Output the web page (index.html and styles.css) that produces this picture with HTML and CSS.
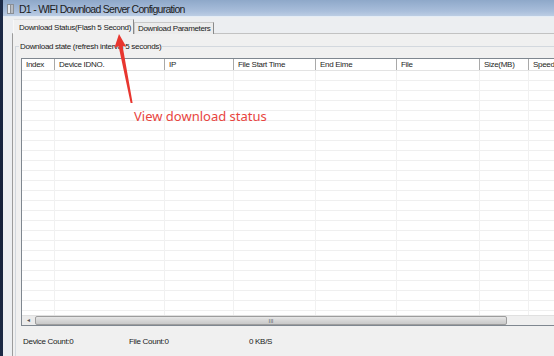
FILE: index.html
```html
<!DOCTYPE html>
<html>
<head>
<meta charset="utf-8">
<link rel="stylesheet" href="styles.css">
</head>
<body>
<div class="screen">
  <div class="desk-strip"></div>
  <div class="window">
    <div class="titlebar">
      <svg class="app-icon" width="7" height="10" viewBox="0 0 7 10"><rect x="0" y="0" width="7" height="10" fill="#8a8f96"/><rect x="1" y="1" width="2" height="8" fill="#e8eaee"/><rect x="4" y="1" width="2" height="8" fill="#b9bdc3"/></svg>
      <span class="title">D1 - WIFI Download Server Configuration</span>
    </div>
    <div class="frame">
      <div class="tabs">
        <div class="tab active">Download Status(Flash 5 Second)</div>
        <div class="tab">Download Parameters</div>
      </div>
      <div class="tabpage">
        <fieldset class="group">
          <legend>Download state (refresh interval 5 seconds)</legend>
          <div class="listview">
            <div class="lv-header">
              <div class="hcell">Index</div>
              <div class="hcell">Device IDNO.</div>
              <div class="hcell">IP</div>
              <div class="hcell">File Start Time</div>
              <div class="hcell">End Eime</div>
              <div class="hcell">File</div>
              <div class="hcell">Size(MB)</div>
              <div class="hcell">Speed</div>
            </div>
            <div class="lv-body">
              <div class="col"></div><div class="col"></div><div class="col"></div><div class="col"></div>
              <div class="col"></div><div class="col"></div><div class="col"></div><div class="col"></div>
            </div>
            <div class="hscroll">
              <div class="arrow-btn">◂</div>
              <div class="thumb"><span class="grip">III</span></div>
              <div class="track"></div>
            </div>
          </div>
          <div class="status">
            <span class="stat s1">Device Count:0</span>
            <span class="stat s2">File Count:0</span>
            <span class="stat s3">0 KB/S</span>
          </div>
        </fieldset>
      </div>
    </div>
  </div>
  <svg class="annot-arrow" width="554" height="356" viewBox="0 0 554 356">
    <polygon points="119,34 114.5,47.5 118.6,46.3 130.6,103 132.6,103 122.6,46 126.2,46.8" fill="#e8362f"/>
  </svg>
  <div class="annot-text">View download status</div>
</div>
</body>
</html>
```
FILE: styles.css
```css
* { box-sizing: border-box; }
html, body { margin: 0; padding: 0; }
body {
  width: 554px;
  height: 356px;
  overflow: hidden;
  background: #f0f0f0;
  font-family: "Liberation Sans", Arial, sans-serif;
  color: #1a1a1a;
}
.screen {
  position: relative;
  display: flex;
  width: 554px;
  height: 356px;
}
.desk-strip {
  width: 3px;
  flex: none;
  background: linear-gradient(#1b2a48, #16213a 60%, #1c2a45);
}
.window {
  flex: 1;
  display: flex;
  flex-direction: column;
  min-width: 0;
}
.titlebar {
  height: 17px;
  flex: none;
  display: flex;
  align-items: center;
  padding-left: 4px;
  background: linear-gradient(#8ea8c9, #a9bedb 70%, #bccde4);
  border-bottom: 1px solid #e4ecf5;
}
.app-icon { flex: none; margin-right: 5px; margin-top: 1px; }
.title {
  font-size: 10.5px;
  letter-spacing: -0.72px;
  line-height: 12px;
  color: #1c1c1c;
  white-space: nowrap;
  padding-top: 1px;
}
.frame {
  flex: 1;
  display: flex;
  flex-direction: column;
  padding-left: 9px;
  background: #eceef1;
  min-height: 0;
}
.tabs {
  display: flex;
  align-items: flex-end;
  height: 15px;
  margin-top: 2px;
  margin-left: 1px;
  margin-bottom: -1px;
  position: relative;
  z-index: 1;
}
.tab {
  font-size: 8px;
  letter-spacing: -0.35px;
  line-height: 11px;
  white-space: nowrap;
  height: 12px;
  padding: 0 2px 0 3px;
  border: 1px solid #c9c9c9;
  border-bottom: none;
  border-right-color: #8a8a8a;
  background: #ececec;
  color: #1a1a1a;
}
.tab.active {
  height: 15px;
  width: 121px;
  padding: 2px 3px 0 5px;
  letter-spacing: -0.3px;
  background: #f0f0f0;
  border-left-color: #f8f8f8;
  border-top-color: #e2e2e2;
}
.tabpage {
  flex: 1;
  border-top: 1px solid #c2c2c2;
  border-left: 1px solid #9c9c9c;
  background: #f0f0f0;
  display: flex;
  flex-direction: column;
  min-height: 0;
}
.group {
  margin: 7px 0 0 2px;
  padding: 6px 0 0 5px;
  border: 1px solid #d3d8de;
  border-right: none;
  border-bottom: none;
  flex: 1;
  min-width: 0;
  min-height: 0;
}
.group legend {
  font-size: 8px;
  letter-spacing: -0.3px;
  line-height: 11px;
  padding: 0 1px;
  margin-left: -2px;
  color: #1a1a1a;
  white-space: nowrap;
}
.listview {
  width: 560px;
  border: 1px solid #7f8790;
  border-right: none;
  background: #fff;
  display: flex;
  flex-direction: column;
}
.lv-header, .lv-body {
  display: grid;
  grid-template-columns: 33px 110px 69px 82px 81px 83px 49px 80px;
}
.lv-header {
  height: 12px;
  border-bottom: 1px solid #e3e3e3;
  background: #fff;
}
.hcell {
  font-size: 8px;
  letter-spacing: -0.3px;
  line-height: 11px;
  padding-left: 4px;
  border-right: 1px solid #a9a9a9;
  white-space: nowrap;
  overflow: hidden;
  color: #1e1e1e;
}
.lv-body {
  height: 244px;
  background: repeating-linear-gradient(to bottom, transparent 0, transparent 9px, #efefef 9px, #efefef 10px);
}
.col { border-right: 1px solid #f1f1f1; }
.hscroll {
  height: 10px;
  display: flex;
  background: #ebebeb;
  border-top: 1px solid #e0e0e0;
}
.arrow-btn {
  width: 13px;
  flex: none;
  font-size: 6px;
  line-height: 9px;
  color: #555;
  text-align: center;
}
.thumb {
  width: 472px;
  flex: none;
  border: 1px solid #9d9d9d;
  border-radius: 2px;
  background: linear-gradient(#e7e7e7, #d6d6d6 50%, #c9c9c9);
  display: flex;
  align-items: center;
  justify-content: center;
}
.grip {
  font-size: 6px;
  line-height: 6px;
  color: #666;
}
.track { flex: 1; background: #efefef; }
.status {
  display: flex;
  align-items: center;
  height: 12px;
  margin-top: 9px;
}
.stat {
  font-size: 8px;
  letter-spacing: -0.3px;
  line-height: 11px;
  white-space: nowrap;
  color: #1a1a1a;
}
.s1 { margin-left: 2px; width: 106px; }
.s2 { width: 120px; }
.annot-arrow {
  position: absolute;
  left: 0;
  top: 0;
  pointer-events: none;
}
.annot-text {
  position: absolute;
  left: 134px;
  top: 108px;
  font-family: "Noto Sans", "Open Sans", sans-serif;
  font-size: 13px;
  line-height: 16px;
  color: #e8443e;
  white-space: nowrap;
}
```
